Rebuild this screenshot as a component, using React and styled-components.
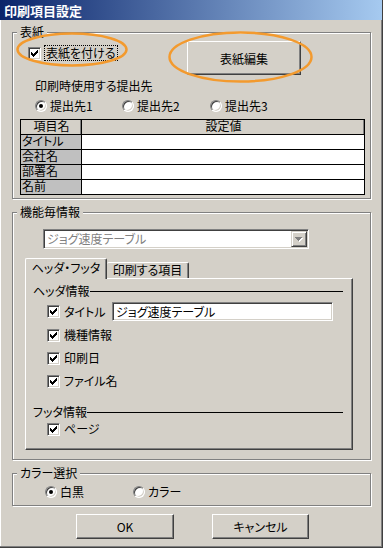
import React from "react";
import styled, { createGlobalStyle } from "styled-components";

const GlobalStyle = createGlobalStyle`
  html, body {
    margin: 0;
    padding: 0;
    background: #d4d0c8;
  }
  body {
    font-family: "Noto Sans CJK JP", "Noto Sans", sans-serif;
    font-size: 12px;
    font-feature-settings: "palt";
    color: #000;
  }
  *, *::before, *::after {
    box-sizing: border-box;
  }
`;

const Window = styled.div`
  position: relative;
  width: 383px;
  height: 548px;
  display: flex;
  flex-direction: column;
  background: #d4d0c8;
  border-right: 1px solid #404040;
  border-bottom: 1px solid #404040;
  box-shadow: inset -1px -1px 0 #808080, inset 1px 0 0 #ffffff;
  overflow: hidden;
`;

const TitleBar = styled.div`
  height: 20px;
  flex-shrink: 0;
  display: flex;
  align-items: center;
  padding-left: 4px;
  background: linear-gradient(to right, #0a246a, #a6caf0);
  color: #fff;
  font-size: 13px;
  font-weight: bold;
`;

const Body = styled.div`
  display: flex;
  flex-direction: column;
  align-items: flex-start;
  padding: 5px 0 0 12px;
`;

const Group = styled.fieldset`
  margin: ${({ $mt }) => $mt || 0}px 0 0 0;
  padding: ${({ $pad }) => $pad || "0 0 0 4px"};
  width: 359px;
  height: ${({ $h }) => $h}px;
  min-width: 0;
  border: 1px solid #808080;
  box-shadow: inset 1px 1px 0 #fff, 1px 1px 0 #fff;
`;

const Legend = styled.legend`
  padding: 0 3px;
  line-height: 14px;
  background: #d4d0c8;
`;

const CoverRow = styled.div`
  display: grid;
  grid-template-columns: 170px 114px;
  height: 34px;
  margin-top: 1px;
`;

const CheckItem = styled.label`
  display: flex;
  align-items: center;
  align-self: ${({ $top }) => ($top ? "start" : "center")};
  gap: ${({ $gap }) => $gap ?? 4}px;
  width: ${({ $w }) => ($w ? `${$w}px` : "auto")};
  margin: ${({ $top }) => $top || 0}px 0 0 ${({ $ml }) => $ml || 0}px;
  line-height: 14px;
  white-space: nowrap;
`;

const FocusText = styled.span`
  border: 1px dotted #000;
  padding: 0 1px;
`;

const Box = styled.span`
  width: 13px;
  height: 13px;
  flex-shrink: 0;
  display: flex;
  align-items: center;
  justify-content: center;
  background: #fff;
  border: 1px solid;
  border-color: #808080 #fff #fff #808080;
  box-shadow: inset 1px 1px 0 #404040, inset -1px -1px 0 #d4d0c8;
`;

const Round = styled.span`
  width: 12px;
  height: 12px;
  flex-shrink: 0;
  display: flex;
  align-items: center;
  justify-content: center;
  border-radius: 50%;
  background: #fff;
  border: 1px solid;
  border-color: #808080 #fff #fff #808080;
  box-shadow: inset 1px 1px 0 #404040, inset -1px -1px 0 #d4d0c8;
`;

const Dot = styled.span`
  width: 4px;
  height: 4px;
  border-radius: 50%;
  background: #000;
`;

const Button = styled.button`
  width: ${({ $w }) => $w}px;
  height: ${({ $h }) => $h || 25}px;
  padding: 0;
  font: inherit;
  color: #000;
  background: #d4d0c8;
  border: 1px solid;
  border-color: #fff #404040 #404040 #fff;
  box-shadow: inset -1px -1px 0 #808080;
  outline: none;
`;

const Prompt = styled.div`
  margin: 4px 0 0 18px;
  line-height: 14px;
`;

const RadioRow = styled.div`
  display: grid;
  grid-template-columns: ${({ $cols }) => $cols};
  height: 14px;
  margin: ${({ $mt }) => $mt}px 0 0 ${({ $ml }) => $ml}px;
`;

const RadioItem = styled.label`
  display: flex;
  align-items: center;
  gap: 3px;
  line-height: 14px;
  white-space: nowrap;
`;

const Table = styled.div`
  display: grid;
  grid-template-columns: 60px 1fr;
  grid-auto-rows: 14px;
  gap: 1px;
  width: 345px;
  margin: 6px 0 0 3px;
  padding: 1px;
  background: #000;
`;

const Cell = styled.div`
  display: flex;
  align-items: center;
  justify-content: ${({ $kind }) => ($kind === "head" ? "center" : "flex-start")};
  padding-left: 1px;
  font-family: "Liberation Sans", "Noto Sans CJK JP", sans-serif;
  line-height: 14px;
  white-space: nowrap;
  background: ${({ $kind }) =>
    $kind === "head" ? "#d4d0c8" : $kind === "fixed" ? "#c0c0c0" : "#fff"};
  box-shadow: ${({ $kind }) => ($kind === "head" ? "inset -1px 0 0 #808080" : "none")};
`;

const Combo = styled.div`
  display: flex;
  width: 266px;
  height: 20px;
  margin: 10px 0 0 26px;
  padding: 1px;
  background: #fff;
  border: 1px solid;
  border-color: #808080 #fff #fff #808080;
  box-shadow: inset 1px 1px 0 #404040, inset -1px -1px 0 #d4d0c8;
`;

const ComboText = styled.div`
  flex: 1;
  padding-left: 2px;
  line-height: 16px;
  color: #808080;
`;

const DropButton = styled.div`
  width: 16px;
  height: 16px;
  display: flex;
  align-items: center;
  justify-content: center;
  background: #d4d0c8;
  border: 1px solid;
  border-color: #d4d0c8 #404040 #404040 #d4d0c8;
  box-shadow: inset 1px 1px 0 #fff, inset -1px -1px 0 #808080;
`;

const Tabs = styled.div`
  display: flex;
  flex-direction: column;
  width: 328px;
  margin: 9px 0 0 8px;
`;

const TabStrip = styled.div`
  position: relative;
  z-index: 1;
  display: flex;
  align-items: flex-end;
  height: 21px;
  margin-bottom: -1px;
`;

const Tab = styled.div`
  width: ${({ $w }) => $w}px;
  height: ${({ $active }) => ($active ? 21 : 16)}px;
  margin-bottom: ${({ $active }) => ($active ? 0 : 1)}px;
  padding-top: ${({ $active }) => ($active ? 2 : 0)}px;
  line-height: ${({ $active }) => ($active ? 14 : 13)}px;
  text-align: center;
  white-space: nowrap;
  background: #d4d0c8;
  border-top: 1px solid #fff;
  border-left: ${({ $active }) => ($active ? "1px solid #fff" : "none")};
  border-right: 1px solid #404040;
  border-radius: 2px 2px 0 0;
  box-shadow: inset -1px 0 0 #808080;
`;

const TabPanel = styled.div`
  height: 172px;
  padding: 5px 9px 0 7px;
  border: 1px solid;
  border-color: #fff #404040 #404040 #fff;
  box-shadow: inset -1px -1px 0 #808080;
`;

const SectionHead = styled.div`
  display: flex;
  align-items: center;
  height: 14px;
  margin-top: ${({ $mt }) => $mt || 0}px;
  line-height: 14px;
  white-space: nowrap;

  &::after {
    content: "";
    flex: 1;
    height: 1px;
    background: #000;
  }
`;

const OptionRow = styled.div`
  display: flex;
  align-items: center;
  height: ${({ $h }) => $h || 14}px;
  margin-top: ${({ $mt }) => $mt}px;
  padding-left: 14px;
`;

const TextBox = styled.div`
  width: 221px;
  height: 19px;
  padding: 1px 0 0 3px;
  line-height: 15px;
  background: #fff;
  border: 1px solid;
  border-color: #808080 #fff #fff #808080;
  box-shadow: inset 1px 1px 0 #404040, inset -1px -1px 0 #d4d0c8;
  white-space: nowrap;
`;

const ButtonRow = styled.div`
  display: flex;
  gap: 38px;
  margin: 8px 0 0 64px;
`;

const Marks = styled.svg`
  position: absolute;
  left: 0;
  top: 0;
  pointer-events: none;
`;

const CheckMark = () => (
  <svg width="7" height="7" viewBox="0 0 7 7" shapeRendering="crispEdges">
    <path d="M0 2h1v3h-1zM1 3h1v3h-1zM2 4h1v3h-1zM3 3h1v3h-1zM4 2h1v3h-1zM5 1h1v3h-1zM6 0h1v3h-1z" fill="#000" />
  </svg>
);

const Check = ({ children, ...rest }) => (
  <CheckItem {...rest}>
    <Box>
      <CheckMark />
    </Box>
    {children}
  </CheckItem>
);

const Radio = ({ on, children }) => (
  <RadioItem>
    <Round>{on && <Dot />}</Round>
    {children}
  </RadioItem>
);

const rows = ["タイトル", "会社名", "部署名", "名前"];

export default function App() {
  return (
    <>
      <GlobalStyle />
      <Window>
        <TitleBar>印刷項目設定</TitleBar>
        <Body>
          <Group $h={174} $pad="1px 0 0 4px">
            <Legend>表紙</Legend>
            <CoverRow>
              <Check $ml={11} $top={4} $gap={3}>
                <FocusText>表紙を付ける</FocusText>
              </Check>
              <Button $w={114} $h={34}>表紙編集</Button>
            </CoverRow>
            <Prompt>印刷時使用する提出先</Prompt>
            <RadioRow $cols="87px 88px 88px" $mt={6} $ml={18}>
              <Radio on>提出先1</Radio>
              <Radio>提出先2</Radio>
              <Radio>提出先3</Radio>
            </RadioRow>
            <Table>
              <Cell $kind="head">項目名</Cell>
              <Cell $kind="head">設定値</Cell>
              {rows.map((r) => (
                <React.Fragment key={r}>
                  <Cell $kind="fixed">{r}</Cell>
                  <Cell />
                </React.Fragment>
              ))}
            </Table>
          </Group>

          <Group $mt={6} $h={255}>
            <Legend>機能毎情報</Legend>
            <Combo>
              <ComboText>ジョグ速度テーブル</ComboText>
              <DropButton>
                <svg width="8" height="5" viewBox="0 0 8 5" shapeRendering="crispEdges">
                  <path d="M1 1h7v1h-1v1h-1v1h-1v1h-1v-1h-1v-1h-1v-1h-1z" fill="#fff" />
                  <path d="M0 0h7v1h-1v1h-1v1h-1v1h-1v-1h-1v-1h-1v-1h-1z" fill="#808080" />
                </svg>
              </DropButton>
            </Combo>
            <Tabs>
              <TabStrip>
                <Tab $active $w={82}>ヘッダ・フッタ</Tab>
                <Tab $w={82}>印刷する項目</Tab>
              </TabStrip>
              <TabPanel>
                <SectionHead>ヘッダ情報</SectionHead>
                <OptionRow $h={19} $mt={4}>
                  <Check $w={65}>タイトル</Check>
                  <TextBox>ジョグ速度テーブル</TextBox>
                </OptionRow>
                <OptionRow $mt={7}>
                  <Check>機種情報</Check>
                </OptionRow>
                <OptionRow $mt={9}>
                  <Check>印刷日</Check>
                </OptionRow>
                <OptionRow $mt={9}>
                  <Check>ファイル名</Check>
                </OptionRow>
                <SectionHead $mt={17}>フッタ情報</SectionHead>
                <OptionRow $mt={3}>
                  <Check>ページ</Check>
                </OptionRow>
              </TabPanel>
            </Tabs>
          </Group>

          <Group $mt={6} $h={40}>
            <Legend>カラー選択</Legend>
            <RadioRow $cols="88px 88px" $mt={5} $ml={28}>
              <Radio on>白黒</Radio>
              <Radio>カラー</Radio>
            </RadioRow>
          </Group>

          <ButtonRow>
            <Button $w={98}>OK</Button>
            <Button $w={97}>キャンセル</Button>
          </ButtonRow>
        </Body>

        <Marks width="383" height="548">
          <ellipse cx="72" cy="49.5" rx="54.5" ry="16" fill="none" stroke="#f39a2e" strokeWidth="2.5" />
          <ellipse cx="240.5" cy="57" rx="71" ry="24.5" fill="none" stroke="#f39a2e" strokeWidth="2.5" />
        </Marks>
      </Window>
    </>
  );
}
